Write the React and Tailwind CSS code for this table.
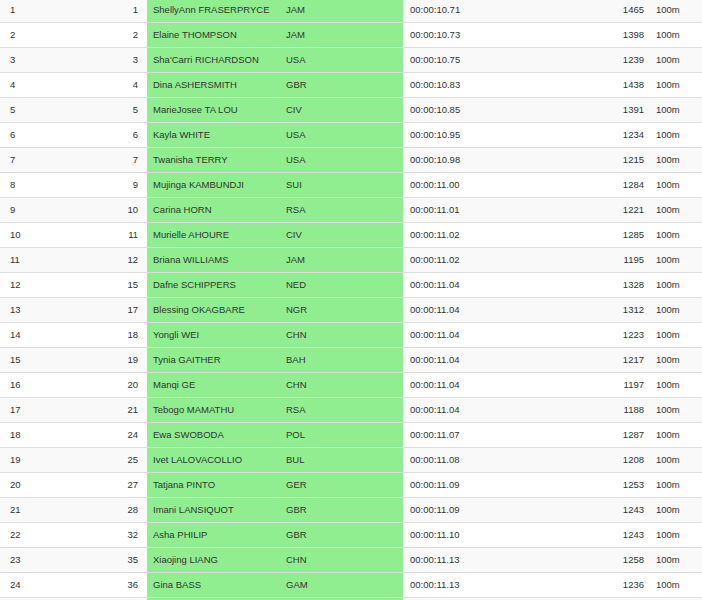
import React from "react";

const rows = [
  [1, 1, "ShellyAnn FRASERPRYCE", "JAM", "00:00:10.71", 1465],
  [2, 2, "Elaine THOMPSON", "JAM", "00:00:10.73", 1398],
  [3, 3, "Sha'Carri RICHARDSON", "USA", "00:00:10.75", 1239],
  [4, 4, "Dina ASHERSMITH", "GBR", "00:00:10.83", 1438],
  [5, 5, "MarieJosee TA LOU", "CIV", "00:00:10.85", 1391],
  [6, 6, "Kayla WHITE", "USA", "00:00:10.95", 1234],
  [7, 7, "Twanisha TERRY", "USA", "00:00:10.98", 1215],
  [8, 9, "Mujinga KAMBUNDJI", "SUI", "00:00:11.00", 1284],
  [9, 10, "Carina HORN", "RSA", "00:00:11.01", 1221],
  [10, 11, "Murielle AHOURE", "CIV", "00:00:11.02", 1285],
  [11, 12, "Briana WILLIAMS", "JAM", "00:00:11.02", 1195],
  [12, 15, "Dafne SCHIPPERS", "NED", "00:00:11.04", 1328],
  [13, 17, "Blessing OKAGBARE", "NGR", "00:00:11.04", 1312],
  [14, 18, "Yongli WEI", "CHN", "00:00:11.04", 1223],
  [15, 19, "Tynia GAITHER", "BAH", "00:00:11.04", 1217],
  [16, 20, "Manqi GE", "CHN", "00:00:11.04", 1197],
  [17, 21, "Tebogo MAMATHU", "RSA", "00:00:11.04", 1188],
  [18, 24, "Ewa SWOBODA", "POL", "00:00:11.07", 1287],
  [19, 25, "Ivet LALOVACOLLIO", "BUL", "00:00:11.08", 1208],
  [20, 27, "Tatjana PINTO", "GER", "00:00:11.09", 1253],
  [21, 28, "Imani LANSIQUOT", "GBR", "00:00:11.09", 1243],
  [22, 32, "Asha PHILIP", "GBR", "00:00:11.10", 1243],
  [23, 35, "Xiaojing LIANG", "CHN", "00:00:11.13", 1258],
  [24, 36, "Gina BASS", "GAM", "00:00:11.13", 1236],
  [25, "", "", "", "", ""],
];

export default function App() {
  return (
    <div className="w-[702px] h-[600px] overflow-hidden bg-white">
      <table
        className="-mt-[3px] w-[702px] table-fixed border-collapse text-[9.5px] text-[#333]"
        style={{ fontFamily: '"Liberation Sans", Arial, sans-serif' }}
      >
        <colgroup>
          <col className="w-[73px]" />
          <col className="w-[74px]" />
          <col className="w-[133px]" />
          <col className="w-[123px]" />
          <col className="w-[157px]" />
          <col className="w-[90px]" />
          <col className="w-[52px]" />
        </colgroup>
        <tbody>
          {rows.map((r, i) => {
            const last = i === rows.length - 1;
            return (
              <tr
                key={r[0]}
                className={i % 2 === 0 ? "bg-[#f9f9f9]" : "bg-white"}
              >
                <td className="h-[25px] border-t border-[#dddddd] pl-[10px] align-middle">
                  {last ? "" : r[0]}
                </td>
                <td className="h-[25px] border-t border-[#dddddd] pr-[9px] text-right align-middle">
                  {r[1]}
                </td>
                <td className="h-[25px] border-t border-[#dddddd] bg-[#90ee90] pl-[6px] align-middle whitespace-nowrap">
                  {r[2]}
                </td>
                <td className="h-[25px] border-t border-[#dddddd] bg-[#90ee90] pl-[6px] align-middle">
                  {r[3]}
                </td>
                <td className="h-[25px] border-t border-[#dddddd] pl-[7px] align-middle">
                  {r[4]}
                </td>
                <td className="h-[25px] border-t border-[#dddddd] pr-[6px] text-right align-middle">
                  {r[5]}
                </td>
                <td className="h-[25px] border-t border-[#dddddd] pl-[6px] align-middle">
                  {last ? "" : "100m"}
                </td>
              </tr>
            );
          })}
        </tbody>
      </table>
    </div>
  );
}
